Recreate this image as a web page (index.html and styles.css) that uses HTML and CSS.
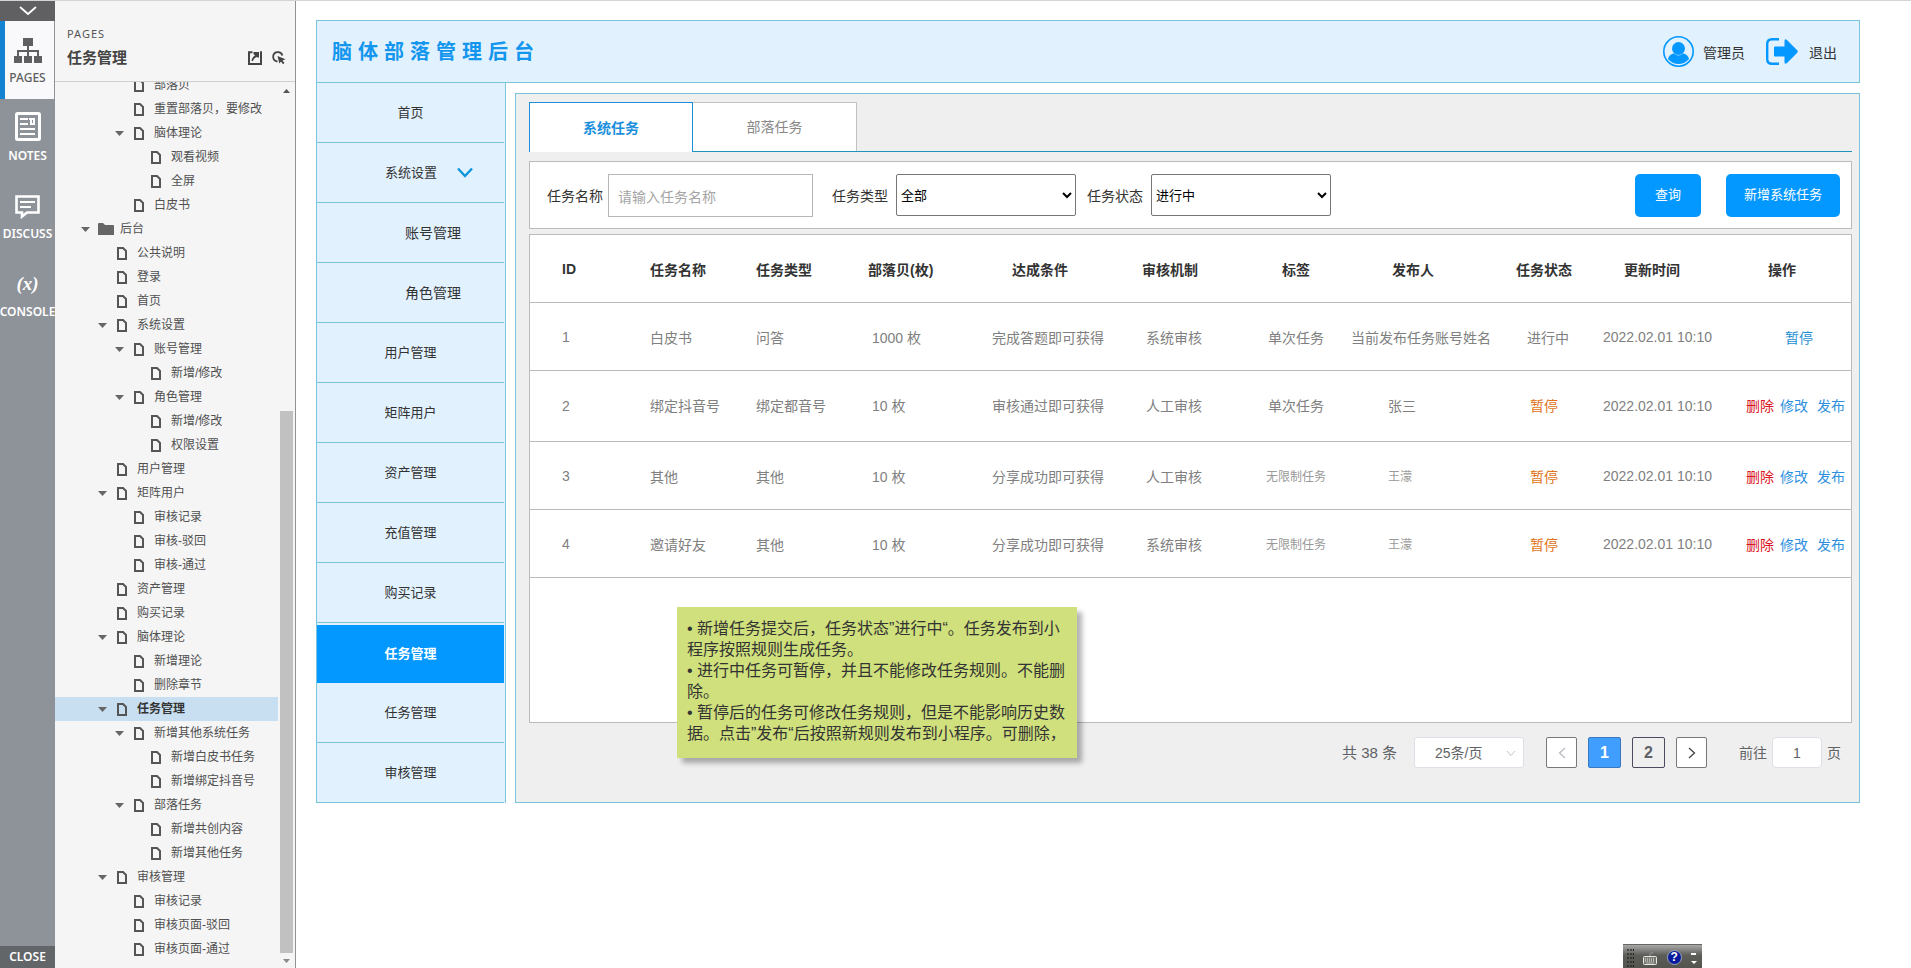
FILE: index.html
```html
<!DOCTYPE html>
<html lang="zh-CN">
<head>
<meta charset="utf-8">
<title>任务管理</title>
<link rel="stylesheet" href="styles.css">
</head>
<body>
<svg class="sprite" aria-hidden="true">
  <symbol id="doc" viewBox="0 0 10 13"><path d="M1 1h5L9 4v8H1z" fill="none" stroke="currentColor" stroke-width="2"/></symbol>
  <symbol id="folder" viewBox="0 0 16 12"><path d="M0 1q0-1 1-1h4l2 2h8q1 0 1 1v9H0z" fill="currentColor"/></symbol>
  <symbol id="down" viewBox="0 0 9 5"><path d="M0 0h9L4.500 5z" fill="currentColor"/></symbol>
</svg>
<div class="shell">
  <nav class="rail">
    <button class="rail-toggle" aria-label="收起"><svg width="18" height="10" viewBox="0 0 18 10"><path d="M1 1l8 7 8-7" fill="none" stroke="#fff" stroke-width="1.800"/></svg></button>
    <button class="rail-item is-active">
      <svg width="28" height="25" viewBox="0 0 28 25"><path d="M9 0h10v8H9zM0 18h8v7H0zM10 18h8v7h-8zM20 18h8v7h-8z" fill="#5f5f61"/><path d="M14 8v10M4 18v-5h20v5" fill="none" stroke="#5f5f61" stroke-width="2"/></svg>
      <span>PAGES</span>
    </button>
    <button class="rail-item">
      <svg width="26" height="29" viewBox="0 0 26 29"><rect x="1.500" y="1.500" width="23" height="26" rx="1" fill="none" stroke="#fff" stroke-width="3"/><path d="M5 7h8M5 12h8M5 17h15M5 22h15M14 7h5v5h-3V7" fill="none" stroke="#fff" stroke-width="2"/></svg>
      <span>NOTES</span>
    </button>
    <button class="rail-item">
      <svg width="25" height="24" viewBox="0 0 25 24"><path d="M1.500 1.500h22v16H12l-5 4v-4H1.500z" fill="none" stroke="#fff" stroke-width="2.600"/><path d="M5 7h15M5 12h11" stroke="#fff" stroke-width="2"/></svg>
      <span>DISCUSS</span>
    </button>
    <button class="rail-item">
      <i class="var">(x)</i>
      <span>CONSOLE</span>
    </button>
    <button class="rail-close">CLOSE</button>
  </nav>

  <aside class="panel">
    <header class="panel-head">
      <p class="panel-kicker">PAGES</p>
      <div class="panel-row">
        <h2>任务管理</h2>
        <button class="icon-btn" aria-label="打开"><svg width="14" height="14" viewBox="0 0 14 14"><path d="M4.500 1.200H1v11.800h12V1.200h-1" fill="none" stroke="#444" stroke-width="2"/><path d="M3.500 10C3.800 7 5.500 5.500 7 4.500L5.500 3V1H11v5.500H9.500L8.500 6C6.500 7 5.500 8.500 5 10z" fill="#444"/></svg></button>
        <button class="icon-btn" aria-label="定位"><svg width="14" height="14" viewBox="0 0 14 14"><path d="M5.500 10.500A4.700 4.700 0 1 1 10.400 4.500" fill="none" stroke="#444" stroke-width="1.800"/><path d="M5.500 5l8 3.200-3 1.200 2 2.600-1.500 1.200-2-2.700-1.700 2z" fill="#444"/></svg></button>
      </div>
    </header>
    <div class="panel-body">
      <ul class="tree">
        <li class="d2"><svg class="doc"><use href="#doc"/></svg><a href="#">部落贝</a></li>
        <li class="d2"><svg class="doc"><use href="#doc"/></svg><a href="#">重置部落贝，要修改</a></li>
        <li class="d2 open"><button aria-label="折叠"><svg><use href="#down"/></svg></button><svg class="doc"><use href="#doc"/></svg><a href="#">脑体理论</a></li>
        <li class="d3"><svg class="doc"><use href="#doc"/></svg><a href="#">观看视频</a></li>
        <li class="d3"><svg class="doc"><use href="#doc"/></svg><a href="#">全屏</a></li>
        <li class="d2"><svg class="doc"><use href="#doc"/></svg><a href="#">白皮书</a></li>
        <li class="d0 open"><button aria-label="折叠"><svg><use href="#down"/></svg></button><svg class="folder"><use href="#folder"/></svg><a href="#">后台</a></li>
        <li class="d1"><svg class="doc"><use href="#doc"/></svg><a href="#">公共说明</a></li>
        <li class="d1"><svg class="doc"><use href="#doc"/></svg><a href="#">登录</a></li>
        <li class="d1"><svg class="doc"><use href="#doc"/></svg><a href="#">首页</a></li>
        <li class="d1 open"><button aria-label="折叠"><svg><use href="#down"/></svg></button><svg class="doc"><use href="#doc"/></svg><a href="#">系统设置</a></li>
        <li class="d2 open"><button aria-label="折叠"><svg><use href="#down"/></svg></button><svg class="doc"><use href="#doc"/></svg><a href="#">账号管理</a></li>
        <li class="d3"><svg class="doc"><use href="#doc"/></svg><a href="#">新增/修改</a></li>
        <li class="d2 open"><button aria-label="折叠"><svg><use href="#down"/></svg></button><svg class="doc"><use href="#doc"/></svg><a href="#">角色管理</a></li>
        <li class="d3"><svg class="doc"><use href="#doc"/></svg><a href="#">新增/修改</a></li>
        <li class="d3"><svg class="doc"><use href="#doc"/></svg><a href="#">权限设置</a></li>
        <li class="d1"><svg class="doc"><use href="#doc"/></svg><a href="#">用户管理</a></li>
        <li class="d1 open"><button aria-label="折叠"><svg><use href="#down"/></svg></button><svg class="doc"><use href="#doc"/></svg><a href="#">矩阵用户</a></li>
        <li class="d2"><svg class="doc"><use href="#doc"/></svg><a href="#">审核记录</a></li>
        <li class="d2"><svg class="doc"><use href="#doc"/></svg><a href="#">审核-驳回</a></li>
        <li class="d2"><svg class="doc"><use href="#doc"/></svg><a href="#">审核-通过</a></li>
        <li class="d1"><svg class="doc"><use href="#doc"/></svg><a href="#">资产管理</a></li>
        <li class="d1"><svg class="doc"><use href="#doc"/></svg><a href="#">购买记录</a></li>
        <li class="d1 open"><button aria-label="折叠"><svg><use href="#down"/></svg></button><svg class="doc"><use href="#doc"/></svg><a href="#">脑体理论</a></li>
        <li class="d2"><svg class="doc"><use href="#doc"/></svg><a href="#">新增理论</a></li>
        <li class="d2"><svg class="doc"><use href="#doc"/></svg><a href="#">删除章节</a></li>
        <li class="d1 open is-current"><button aria-label="折叠"><svg><use href="#down"/></svg></button><svg class="doc"><use href="#doc"/></svg><a href="#">任务管理</a></li>
        <li class="d2 open"><button aria-label="折叠"><svg><use href="#down"/></svg></button><svg class="doc"><use href="#doc"/></svg><a href="#">新增其他系统任务</a></li>
        <li class="d3"><svg class="doc"><use href="#doc"/></svg><a href="#">新增白皮书任务</a></li>
        <li class="d3"><svg class="doc"><use href="#doc"/></svg><a href="#">新增绑定抖音号</a></li>
        <li class="d2 open"><button aria-label="折叠"><svg><use href="#down"/></svg></button><svg class="doc"><use href="#doc"/></svg><a href="#">部落任务</a></li>
        <li class="d3"><svg class="doc"><use href="#doc"/></svg><a href="#">新增共创内容</a></li>
        <li class="d3"><svg class="doc"><use href="#doc"/></svg><a href="#">新增其他任务</a></li>
        <li class="d1 open"><button aria-label="折叠"><svg><use href="#down"/></svg></button><svg class="doc"><use href="#doc"/></svg><a href="#">审核管理</a></li>
        <li class="d2"><svg class="doc"><use href="#doc"/></svg><a href="#">审核记录</a></li>
        <li class="d2"><svg class="doc"><use href="#doc"/></svg><a href="#">审核页面-驳回</a></li>
        <li class="d2"><svg class="doc"><use href="#doc"/></svg><a href="#">审核页面-通过</a></li>
      </ul>
      <div class="scroll">
        <svg width="7" height="4" viewBox="0 0 7 4"><path d="M0 4h7L3.500 0z" fill="#555"/></svg>
        <div class="thumb"></div>
        <svg width="7" height="4" viewBox="0 0 7 4"><path d="M0 0h7L3.500 4z" fill="#888"/></svg>
      </div>
    </div>
  </aside>

  <div class="stage">
    <header class="topbar">
      <h1>脑体部落管理后台</h1>
      <a class="user" href="#"><svg width="31" height="31" viewBox="0 0 31 31"><circle cx="15.500" cy="15.500" r="14.700" fill="none" stroke="#0398ff" stroke-width="1.600"/><circle cx="15.500" cy="12.500" r="6.500" fill="#0398ff"/><path d="M5 23c1-4 4-5.500 6.500-5.500 2 2.500 6 2.500 8 0 2.500 0 5.500 1.500 6.500 5.500a13.500 13.500 0 0 1-21 0z" fill="#0398ff"/></svg><span>管理员</span></a>
      <a class="logout" href="#"><svg width="32" height="27" viewBox="0 0 32 27"><path d="M13 1.200H6Q1.200 1.200 1.200 6v15q0 4.800 4.800 4.800h7" fill="none" stroke="#0398ff" stroke-width="2.400"/><path d="M9 8.500h9.500V3q0-3 2.500-1l10 10q1.500 1.500 0 3L21 25q-2.500 2-2.500-1v-5.500H9q-1 0-1-1v-8q0-1 1-1z" fill="#0398ff"/></svg><span>退出</span></a>
    </header>
    <div class="columns">
      <nav class="menu">
        <a href="#">首页</a>
        <a href="#" class="has-arrow">系统设置<svg width="16" height="11" viewBox="0 0 16 11"><path d="M1 1.500l7 7.500 7-7.500" fill="none" stroke="#1296db" stroke-width="2.400"/></svg></a>
        <a href="#" class="sub">账号管理</a>
        <a href="#" class="sub">角色管理</a>
        <a href="#">用户管理</a>
        <a href="#">矩阵用户</a>
        <a href="#">资产管理</a>
        <a href="#">充值管理</a>
        <a href="#">购买记录</a>
        <a href="#" class="is-active">任务管理</a>
        <a href="#">任务管理</a>
        <a href="#">审核管理</a>
      </nav>
      <main class="content">
        <div class="tabs" role="tablist">
          <button class="tab is-active" role="tab" aria-selected="true">系统任务</button>
          <button class="tab" role="tab" aria-selected="false">部落任务</button>
        </div>
        <form class="filter">
          <label for="name">任务名称</label>
          <input id="name" type="text" placeholder="请输入任务名称">
          <label for="type">任务类型</label>
          <select id="type"><option>全部</option></select>
          <label for="state">任务状态</label>
          <select id="state"><option>进行中</option></select>
          <button type="button" class="btn search">查询</button>
          <button type="button" class="btn add">新增系统任务</button>
        </form>
        <div class="sheet">
          <table>
            <colgroup><col class="w-id"><col class="w-name"><col class="w-type"><col class="w-coin"><col class="w-cond"><col class="w-audit"><col class="w-tag"><col class="w-by"><col class="w-state"><col class="w-time"><col class="w-act"></colgroup>
            <thead>
              <tr><th class="id">ID</th><th>任务名称</th><th>任务类型</th><th class="coin">部落贝(枚)</th><th class="cond">达成条件</th><th class="audit">审核机制</th><th class="mid">标签</th><th class="by">发布人</th><th class="mid">任务状态</th><th class="mid">更新时间</th><th class="mid">操作</th></tr>
            </thead>
            <tbody>
              <tr><td class="id">1</td><td>白皮书</td><td>问答</td><td class="coin">1000 枚</td><td class="mid">完成答题即可获得</td><td class="audit">系统审核</td><td class="mid">单次任务</td><td class="wide">当前发布任务账号姓名</td><td class="mid running">进行中</td><td class="time">2022.02.01 10:10</td><td class="single"><a href="#">暂停</a></td></tr>
              <tr class="tall"><td class="id">2</td><td>绑定抖音号</td><td>绑定都音号</td><td class="coin">10 枚</td><td class="mid">审核通过即可获得</td><td class="audit">人工审核</td><td class="mid">单次任务</td><td class="by">张三</td><td class="mid paused">暂停</td><td class="time">2022.02.01 10:10</td><td class="acts"><a class="del" href="#">删除</a><a href="#">修改</a><a class="pub" href="#">发布</a></td></tr>
              <tr><td class="id">3</td><td>其他</td><td>其他</td><td class="coin">10 枚</td><td class="mid">分享成功即可获得</td><td class="audit">人工审核</td><td class="mid small">无限制任务</td><td class="by small">王濛</td><td class="mid paused">暂停</td><td class="time">2022.02.01 10:10</td><td class="acts"><a class="del" href="#">删除</a><a href="#">修改</a><a class="pub" href="#">发布</a></td></tr>
              <tr><td class="id">4</td><td>邀请好友</td><td>其他</td><td class="coin">10 枚</td><td class="mid">分享成功即可获得</td><td class="audit">系统审核</td><td class="mid small">无限制任务</td><td class="by small">王濛</td><td class="mid paused">暂停</td><td class="time">2022.02.01 10:10</td><td class="acts"><a class="del" href="#">删除</a><a href="#">修改</a><a class="pub" href="#">发布</a></td></tr>
            </tbody>
          </table>
          <div class="note">
            <p>• 新增任务提交后，任务状态”进行中“。任务发布到小<br>程序按照规则生成任务。</p>
            <p>• 进行中任务可暂停，并且不能修改任务规则。不能删<br>除。</p>
            <p>• 暂停后的任务可修改任务规则，但是不能影响历史数<br>据。点击”发布“后按照新规则发布到小程序。可删除，</p>
          </div>
        </div>
        <div class="pager">
          <span class="total">共 38 条</span>
          <div class="size"><select aria-label="每页条数"><option>25条/页</option></select><svg width="10" height="7" viewBox="0 0 10 7"><path d="M1 1l4 4.500L9 1" fill="none" stroke="#c0c4cc"/></svg></div>
          <button class="step" aria-label="上一页"><svg width="8" height="12" viewBox="0 0 8 12"><path d="M7 1L1.500 6 7 11" fill="none" stroke="#b4b8bf" stroke-width="1.200"/></svg></button>
          <button class="num is-active">1</button>
          <button class="num">2</button>
          <button class="step" aria-label="下一页"><svg width="8" height="12" viewBox="0 0 8 12"><path d="M1 1l5.500 5L1 11" fill="none" stroke="#444" stroke-width="1.300"/></svg></button>
          <label class="goto">前往<input type="text" value="1">页</label>
        </div>
      </main>
    </div>
  </div>
</div>
<div class="tray">
  <svg width="7" height="18" viewBox="0 0 7 18"><path d="M1 0v18M4 0v18M6.500 0v18" stroke="#222" stroke-width="1.200" stroke-dasharray="2 2"/></svg>
  <svg width="14" height="14" viewBox="0 0 14 14"><path d="M7 5V3q0-1 3-1.500" fill="none" stroke="#999"/><rect x="0.500" y="5.500" width="13" height="8" rx="1" fill="#77776f" stroke="#e8e8e4"/><path d="M2 8h10M2 10h10M3.500 12h7" stroke="#f4f4f0" stroke-dasharray="1 1"/></svg>
  <span class="help">?</span>
  <svg width="6" height="14" viewBox="0 0 6 14"><path d="M0 2h5v2H0zM0 10h6l-3 3z" fill="#fff"/></svg>
</div>
</body>
</html>
```
FILE: styles.css
```css
* { box-sizing: border-box; }
body {
  margin: 0;
  background: #fff;
  font-family: "Liberation Sans", "Noto Sans CJK SC", sans-serif;
  font-size: 14px;
  line-height: 20px;
  color: #333;
}
h1, h2, p, ul { margin: 0; padding: 0; }
a { color: inherit; text-decoration: none; }
button, input, select { font: inherit; color: inherit; }
button { border: 0; padding: 0; background: none; }
svg { flex: none; display: block; }
.sprite { display: none; }

.shell {
  display: flex;
  height: 100vh;
  border-top: 1px solid #d4d4d4;
}

/* tool rail */
.rail {
  flex: none;
  width: 55px;
  display: flex;
  flex-direction: column;
  background: #8e9299;
  overflow: hidden;
  font-family: "Noto Sans", sans-serif;
  font-size: 12px;
  font-weight: 600;
  letter-spacing: 1px;
  color: #fff;
}
.rail-toggle {
  height: 20px;
  background: #606062;
  display: flex;
  align-items: center;
  justify-content: center;
}
.rail-item {
  height: 78px;
  display: flex;
  flex-direction: column;
  align-items: center;
  justify-content: flex-end;
  gap: 5px;
  padding-bottom: 11px;
  line-height: 20px;
}
.rail-item.is-active {
  background: #f9f9fb;
  border-left: 5px solid #1482d2;
  padding-right: 4px;
  margin-right: 1px;
  font-weight: 500;
  color: #5f5f61;
}
.var { font: italic bold 19px/26px "Liberation Serif", serif; letter-spacing: 0; }
.rail-close {
  margin-top: auto;
  height: 22px;
  background: #636669;
  line-height: 22px;
}

/* page tree */
.panel {
  flex: none;
  width: 241px;
  display: flex;
  flex-direction: column;
  background: #f5f5f6;
  border-right: 1px solid #919196;
}
.panel-head {
  height: 81px;
  padding: 23px 9px 0 12px;
  border-bottom: 1px solid #cfcfcf;
}
.panel-kicker {
  font-family: "Noto Sans", sans-serif;
  font-size: 11px;
  letter-spacing: 1px;
  color: #555;
}
.panel-row { display: flex; align-items: center; gap: 10px; height: 27px; }
.panel-row h2 { flex: 1; font-size: 15px; font-weight: bold; color: #444; }
.panel-body { flex: 1; min-height: 0; display: flex; gap: 2px; overflow: hidden; }
.tree {
  flex: 1;
  margin-top: -9px;
  list-style: none;
  font-size: 12px;
  color: #505050;
}
.tree li { display: flex; align-items: center; height: 24px; gap: 10px; }
.tree button { width: 9px; color: #666; }
.tree button svg { width: 9px; height: 5px; }
.tree .doc { width: 10px; height: 13px; color: #555; }
.tree .folder { width: 16px; height: 12px; color: #666; margin: 0 -4px 0 -2px; }
.tree .d0.open { padding-left: 26px; }
.tree .d1 { padding-left: 62px; }
.tree .d2 { padding-left: 79px; }
.tree .d3 { padding-left: 96px; }
.tree .d1.open { padding-left: 43px; }
.tree .d2.open { padding-left: 60px; }
.tree li.is-current { background: #c8dff1; color: #333; font-weight: bold; }
.scroll {
  flex: none;
  width: 15px;
  display: flex;
  flex-direction: column;
  align-items: center;
  justify-content: space-between;
  padding: 7px 2px 5px 0;
}
.thumb { width: 13px; height: 542px; margin: auto 0 6px; background: #c1c1c1; }

/* admin page */
.stage { flex: 1; min-width: 0; padding: 19px 51px 0 20px; }
.topbar {
  display: flex;
  align-items: center;
  height: 63px;
  padding: 0 22px 0 15px;
  border: 1px solid #7ac5dc;
  background: #e1f1fe;
}
.topbar h1 {
  flex: 1;
  font-size: 20px;
  line-height: 30px;
  letter-spacing: 6px;
  color: #1296ee;
}
.topbar a { display: flex; align-items: center; }
.user { gap: 9px; margin-right: 21px; }
.logout { gap: 11px; }
.topbar span { padding-top: 2px; }
.columns { display: flex; gap: 9px; }
.menu {
  flex: none;
  width: 190px;
  padding-right: 1px;
  border: solid #7ac5dc;
  border-width: 0 1px;
  background: #e1f1fe;
}
.menu a {
  display: flex;
  align-items: center;
  justify-content: center;
  height: 60px;
  border-bottom: 1px solid #7ac5dc;
  font-size: 13px;
}
.menu .has-arrow { padding-left: 37px; gap: 20px; }
.menu .sub { padding-left: 45px; font-size: 14px; }
.menu .is-active {
  border-top: 2px solid #e1f1fe;
  border-bottom-color: #0398ff;
  background: #0398ff;
  color: #fff;
  font-weight: bold;
}
.content {
  flex: 1;
  min-width: 0;
  margin-top: 10px;
  padding: 8px 7px 33px 13px;
  border: 1px solid #7ac5dc;
  background: #efefef;
}
.tabs { display: flex; height: 50px; border-bottom: 1px solid #1f93c0; }
.tab {
  width: 164px;
  border: solid #c2c2c2;
  border-width: 1px 1px 0 0;
  background: #fff;
  color: #888;
}
.tab.is-active {
  height: 50px;
  border: solid #1b8fdc;
  border-width: 1px 1px 0;
  color: #1b8fdc;
  font-weight: bold;
}
.filter {
  display: flex;
  align-items: center;
  height: 68px;
  margin-top: 9px;
  padding: 0 11px 0 17px;
  border: 1px solid #b9bbbc;
  background: #fff;
}
.filter label { padding-top: 2px; }
.filter input {
  width: 205px;
  height: 43px;
  margin: 0 19px 0 5px;
  padding: 4px 9px 0;
  border: 1px solid #b5b8ba;
}
.filter input::placeholder { color: #a5a5a5; }
.filter select {
  width: 180px;
  height: 42px;
  margin: 0 11px 0 8px;
  border: 1px solid #767676;
  border-radius: 2px;
  background: #fff;
  font-size: 13px;
  color: #000;
}
.btn {
  height: 43px;
  border-radius: 5px;
  background: #0398ff;
  color: #fff;
  font-size: 13px;
}
.search { width: 66px; margin-left: auto; margin-right: 25px; }
.add { width: 114px; }

.sheet {
  position: relative;
  min-height: 489px;
  margin-top: 5px;
  border: 1px solid #b9bbbc;
  background: #fff;
}
table { width: 100%; table-layout: fixed; border-collapse: separate; border-spacing: 0; }
th, td {
  height: 68px;
  padding: 2px 0 0;
  border-bottom: 1px solid #b9bbbc;
  text-align: left;
  white-space: nowrap;
}
th { color: #333; }
td { color: #808080; }
th.id, td.id, td.time { padding-top: 0; }
.tall td { height: 71px; padding-top: 0; }
.w-id { width: 120px; }
.w-name { width: 106px; }
.w-type { width: 112px; }
.w-coin { width: 110px; }
.w-cond { width: 140px; }
.w-audit { width: 123px; }
.w-tag { width: 110px; }
.w-by { width: 146px; }
.w-state { width: 94px; }
.w-time { width: 122px; }
.w-act { width: 138px; }
.id { padding-left: 32px; }
td.coin { padding-left: 4px; }
.cond { padding-left: 34px; }
th.audit { padding-left: 24px; }
td.audit { padding-left: 28px; }
.mid { text-align: center; }
.by { padding-left: 37px; }
th.by { padding-left: 41px; }
.time { padding-left: 12px; }
td.running { padding-left: 8px; }
td.small { font-size: 12px; color: #999; }
td.paused { color: #e07220; }
td.single { padding-left: 34px; text-align: center; color: #1c8fd0; }
td.acts { padding-right: 6px; text-align: right; color: #2e90dd; }
.del { margin-right: 6px; color: #d9141e; }
.pub { margin-left: 9px; }

.note {
  position: absolute;
  left: 147px;
  top: 372px;
  width: 400px;
  height: 151px;
  padding: 11px 10px;
  background: #cfe07c;
  box-shadow: 5px 5px 5px rgba(0, 0, 0, .3);
  font-size: 16px;
  line-height: 21px;
  white-space: nowrap;
}

.pager {
  display: flex;
  align-items: center;
  justify-content: flex-end;
  margin-top: 14px;
  padding-right: 11px;
  color: #606266;
}
.total { font-size: 15px; }
.size { position: relative; width: 110px; margin: 0 22px 0 17px; }
.size select {
  appearance: none;
  width: 100%;
  height: 31px;
  padding: 0 32px 0 20px;
  border: 1px solid #dcdfe6;
  border-radius: 3px;
  background: #fff;
}
.size svg { position: absolute; right: 8px; top: 13px; }
.pager button {
  display: flex;
  align-items: center;
  justify-content: center;
  height: 31px;
  border: 1px solid #77777c;
  border-radius: 2px;
}
.step { width: 31px; background: #fff; }
.pager .num {
  width: 33px;
  margin-left: 11px;
  border-color: #4a4a60;
  font-size: 16px;
  font-weight: bold;
}
.num + .step { margin-left: 11px; }
.pager .num.is-active { background: #409eff; border-color: #3a78c0; color: #fff; }
.goto { display: flex; align-items: center; margin-left: 32px; }
.goto input {
  width: 50px;
  height: 31px;
  margin: 0 5px;
  border: 1px solid #dcdfe6;
  border-radius: 4px;
  text-align: center;
}

/* input-method bar pinned to the window edge */
.tray {
  position: fixed;
  right: 209px;
  bottom: 0;
  width: 79px;
  height: 24px;
  padding: 2px 5px 0 4px;
  display: flex;
  align-items: center;
  justify-content: space-between;
  border-top: 1px solid #666;
  background: linear-gradient(#a8a8a8, #5c5c58 45%, #55554f);
}
.help {
  width: 15px;
  height: 15px;
  border: 1px solid #9ab;
  border-radius: 50%;
  background: #0a1a9c;
  color: #fff;
  font-size: 12px;
  font-weight: bold;
  line-height: 13px;
  text-align: center;
}
```
